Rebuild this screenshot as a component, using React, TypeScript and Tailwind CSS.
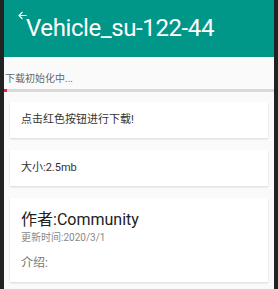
export default function App() {
  const font = { fontFamily: 'Roboto, "Noto Sans CJK SC", sans-serif' };

  return (
    <div className="w-[278px] h-[289px] bg-[#222222] px-[4px] overflow-hidden" style={font}>
      <div className="w-[270px] h-full bg-[#fafafa] flex flex-col">
        <div className="relative h-[57px] bg-[#009688] shrink-0">
          <svg className="absolute left-[14px] top-[11px]" width="9" height="9" viewBox="0 0 9 9" fill="none">
            <path d="M8.5 4.5H1M4.5 1L1 4.5L4.5 8" stroke="white" strokeWidth="1.1" />
          </svg>
          <div className="pl-[22px] pt-[14px] text-[24px] leading-[28px] text-white tracking-[-0.4px]">
            Vehicle_su-122-44
          </div>
        </div>

        <div className="pt-[15px] pl-[1px] text-[10px] leading-[14px] text-[#666]">下载初始化中...</div>
        <div className="mt-[3px] h-[3px] bg-[#d9d9d9] flex">
          <div className="w-[3px] h-full bg-[#e91e63]" />
        </div>

        <div className="mx-[6px] mt-[10px] flex flex-col gap-[12px]">
          <div className="h-[36px] bg-white shadow-[0_1px_2px_rgba(0,0,0,0.14)] flex items-center pl-[11px] text-[11px] text-[#333]">
            点击红色按钮进行下载!
          </div>
          <div className="h-[36px] bg-white shadow-[0_1px_2px_rgba(0,0,0,0.14)] flex items-center pl-[11px] text-[11px] text-[#333]">
            大小:2.5mb
          </div>
          <div className="h-[84px] bg-white shadow-[0_1px_2px_rgba(0,0,0,0.14)] pl-[11px] pt-[12px]">
            <div className="text-[16px] leading-[20px] text-[#222]">作者:Community</div>
            <div className="mt-[2px] text-[10px] leading-[12px] text-[#8a8a8a]">更新时间:2020/3/1</div>
            <div className="mt-[12px] text-[12px] leading-[15px] text-[#777]">介绍:</div>
          </div>
        </div>
      </div>
    </div>
  );
}
